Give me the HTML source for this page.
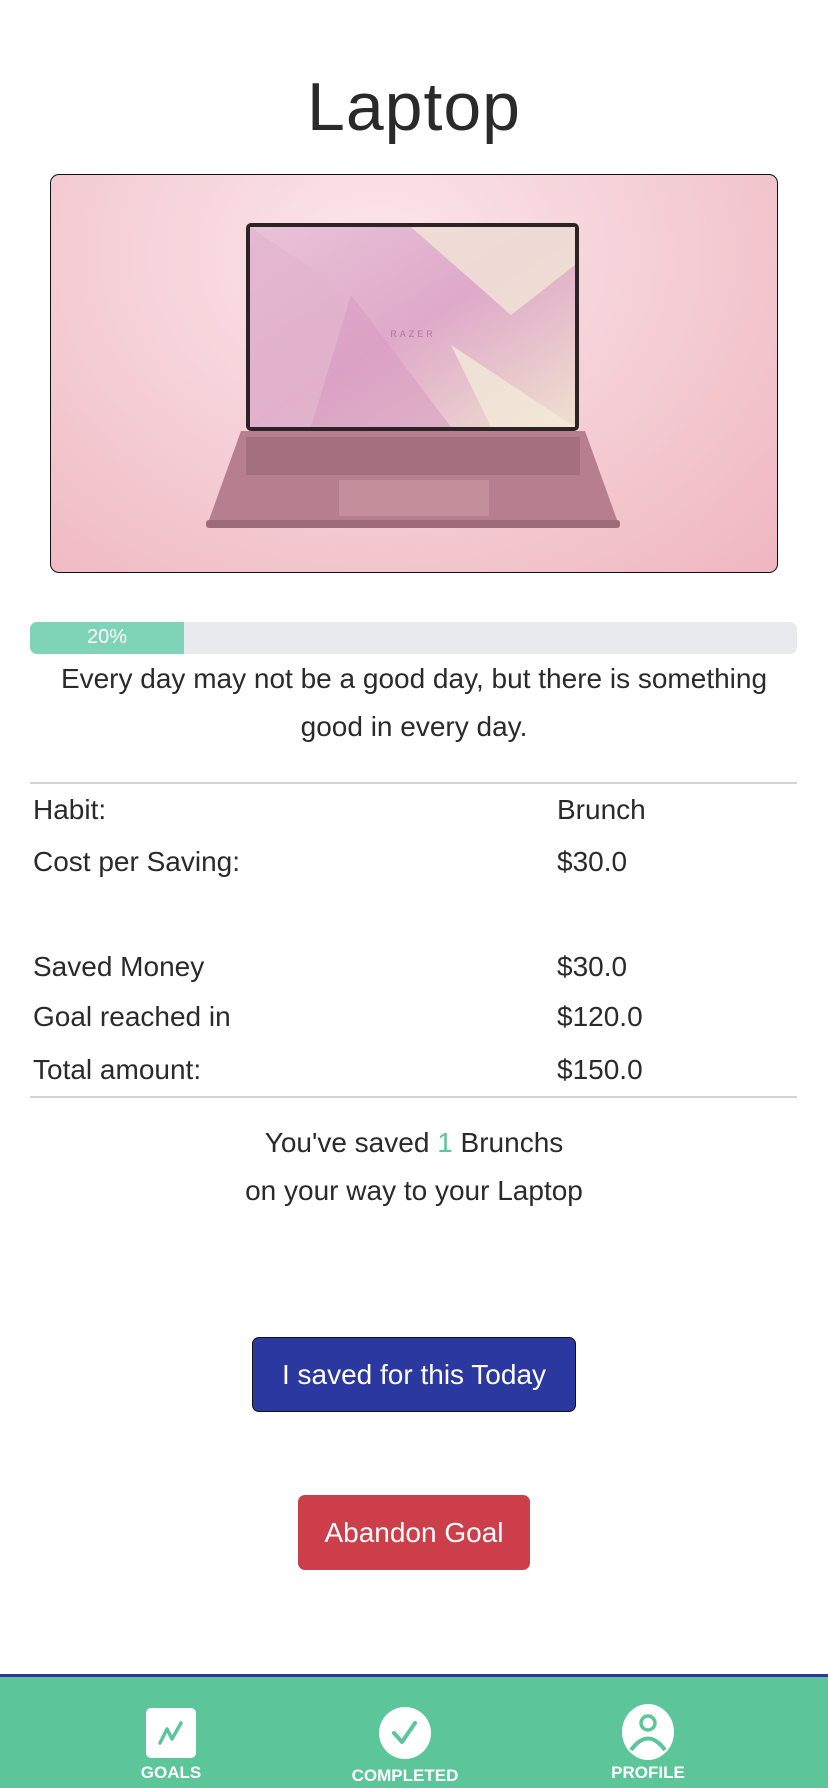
<!DOCTYPE html>
<html><head><meta charset="utf-8"><style>
*{margin:0;padding:0;box-sizing:border-box}
body{width:828px;height:1788px;background:#fff;font-family:"Liberation Sans",sans-serif;color:#2a2a2a;position:relative;overflow:hidden}
.a{position:absolute}
h1{position:absolute;left:0;width:828px;top:68px;text-align:center;font-weight:normal;font-size:68px;letter-spacing:1px;color:#2a2a2a}
.img{left:50px;top:174px;width:728px;height:399px;border:1.5px solid #111;border-radius:9px;overflow:hidden;background:radial-gradient(ellipse at 45% 20%,#fbe6ea 0%,#f5cfd6 50%,#efb6c0 100%)}
.bar{left:30px;top:622px;width:767px;height:32px;background:#e9eaed;border-radius:7px;overflow:hidden}
.fill{left:0;top:0;width:154px;height:32px;background:#7fd3b6;color:#fff;font-size:20px;text-align:center;line-height:30px}
.q{left:0;width:828px;text-align:center;font-size:28px;line-height:48px;top:655px;color:#2a2a2a}
.hr{left:30px;width:767px;height:2px;background:#d3d3d3}
.r{font-size:28px;color:#2a2a2a}
.btn{text-align:center;color:#fff;font-size:28px;border-radius:7px}
.nav{left:0;top:1674px;width:828px;height:114px;background:#5cc59a;border-top:3px solid #2a38a0}
.lbl{color:#fff;font-size:17px;font-weight:bold;text-align:center;width:160px}
</style></head><body>
<h1>Laptop</h1>
<div class="a img">
<svg width="728" height="399" viewBox="0 0 728 399">
<defs><linearGradient id="s" x1="0" y1="0" x2="1" y2="1"><stop offset="0" stop-color="#e9c3d8"/><stop offset=".5" stop-color="#dfa9c9"/><stop offset="1" stop-color="#efe0cf"/></linearGradient></defs>
<rect x="195" y="48" width="333" height="208" rx="5" fill="#2b2326"/>
<rect x="199" y="52" width="325" height="200" fill="url(#s)"/>
<polygon points="199,52 300,120 260,252 199,252" fill="#e2b3cd" opacity=".7"/>
<polygon points="360,52 460,140 524,90 524,52" fill="#f1e6d7" opacity=".8"/>
<polygon points="300,120 400,252 260,252" fill="#d99cc2" opacity=".6"/>
<polygon points="400,170 524,252 440,252" fill="#f3e9d8" opacity=".8"/>
<text x="362" y="162" font-size="9" fill="#b07a92" text-anchor="middle" letter-spacing="3">RAZER</text>
<polygon points="190,256 534,256 566,345 158,345" fill="#b77f8d"/>
<rect x="195" y="262" width="334" height="38" fill="#9a6474" opacity=".6"/>
<rect x="288" y="305" width="150" height="36" fill="#c48e9b"/>
<rect x="155" y="345" width="414" height="8" rx="3" fill="#9e6b78"/>
</svg>
</div>
<div class="a bar"><div class="a fill">20%</div></div>
<div class="a q">Every day may not be a good day, but there is something<br>good in every day.</div>
<div class="a hr" style="top:782px"></div>
<div class="a r" style="left:33px;top:794px">Habit:</div><div class="a r" style="left:557px;top:794px">Brunch</div>
<div class="a r" style="left:33px;top:846px">Cost per Saving:</div><div class="a r" style="left:557px;top:846px">$30.0</div>
<div class="a r" style="left:33px;top:951px">Saved Money</div><div class="a r" style="left:557px;top:951px">$30.0</div>
<div class="a r" style="left:33px;top:1001px">Goal reached in</div><div class="a r" style="left:557px;top:1001px">$120.0</div>
<div class="a r" style="left:33px;top:1054px">Total amount:</div><div class="a r" style="left:557px;top:1054px">$150.0</div>
<div class="a hr" style="top:1096px"></div>
<div class="a q" style="top:1119px">You've saved <span style="color:#5cc59a">1</span> Brunchs<br>on your way to your Laptop</div>
<div class="a btn" style="left:252px;top:1337px;width:324px;height:75px;line-height:73px;background:#2a38a0;border:1.5px solid #111">I saved for this Today</div>
<div class="a btn" style="left:298px;top:1495px;width:232px;height:75px;line-height:75px;background:#cc3f4a">Abandon Goal</div>
<div class="a nav">
<svg class="a" style="left:145px;top:30px" width="52" height="52" viewBox="0 0 52 52"><rect x="1" y="1" width="50" height="50" rx="5" fill="#fff"/><path d="M15 36 L22 22 L27 32 L36 16" stroke="#5cc59a" stroke-width="3.5" fill="none" stroke-linecap="round" stroke-linejoin="round"/></svg>
<div class="a lbl" style="left:91px;top:86px">GOALS</div>
<svg class="a" style="left:378px;top:29px" width="54" height="54" viewBox="0 0 54 54"><circle cx="27" cy="27" r="26" fill="#fff"/><path d="M16 27 L24 36 L37 17" stroke="#5cc59a" stroke-width="4" fill="none" stroke-linecap="round" stroke-linejoin="round"/></svg>
<div class="a lbl" style="left:325px;top:89px">COMPLETED</div>
<svg class="a" style="left:621px;top:26px" width="54" height="58" viewBox="0 0 54 58"><ellipse cx="27" cy="29" rx="26" ry="28" fill="#fff"/><circle cx="27" cy="20" r="7" fill="none" stroke="#5cc59a" stroke-width="3.5"/><path d="M10 47 Q27 24 44 47" stroke="#5cc59a" stroke-width="4" fill="none"/></svg>
<div class="a lbl" style="left:568px;top:86px">PROFILE</div>
</div>
</body></html>
